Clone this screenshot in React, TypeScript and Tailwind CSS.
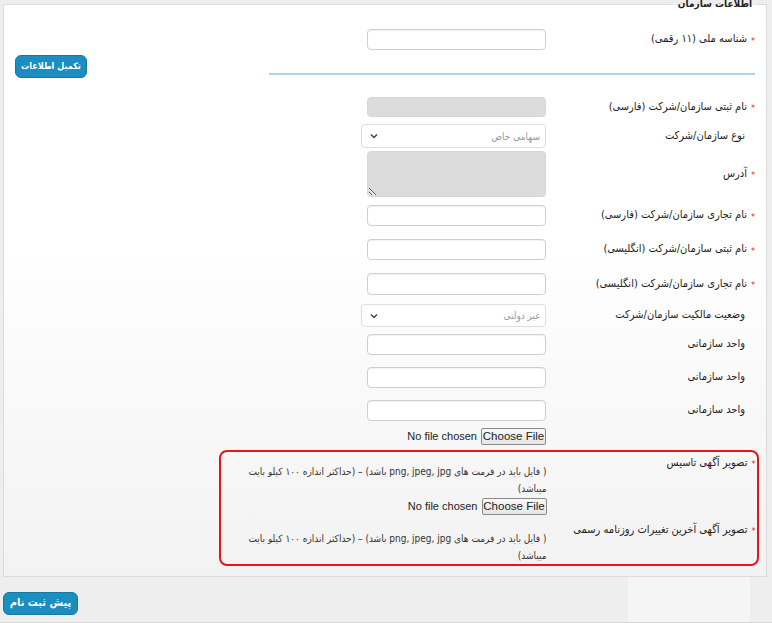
import type { ReactNode } from 'react';

const FA = "font-['DejaVu_Sans_Condensed','DejaVu_Sans',sans-serif]";

const Req = () => <span className="text-[#e0262b] text-[9px] leading-none mt-[3px]">*</span>;

interface RowProps {
    label: string;
    required?: boolean;
    children: ReactNode;
    className?: string;
}

const Row = ({ label, required, children, className = '' }: RowProps) => (
    <div className={`flex items-center ${className}`}>
        <div className={`w-[209px] shrink-0 flex items-center gap-[4px] ${required ? '' : 'pr-[10px]'}`}>
            {required && <Req />}
            <span className="text-[11px] text-[#1c1c1c] whitespace-nowrap">{label}</span>
        </div>
        {children}
    </div>
);

const TextInput = ({ gray = false, h = 'h-[21px]' }: { gray?: boolean; h?: string }) => (
    <input
        type="text"
        readOnly={gray}
        className={`w-[179px] ${h} rounded-[4px] border ${gray ? 'bg-[#dcdcdc] border-[#d6d6d6]' : 'bg-white border-[#cfcfcf] shadow-[inset_0_1px_1px_rgba(0,0,0,0.06)]'} px-2 text-[11px] outline-none`}
    />
);

const Select = ({ value, h }: { value: string; h: string }) => (
    <div className={`w-[185px] ${h} rounded-[4px] border border-[#dedede] bg-white flex items-center justify-between pr-[5px] pl-[8px]`}>
        <span className="text-[10px] text-[#9a9a9a]">{value}</span>
        <svg width="8" height="6" viewBox="0 0 8 6" className="text-[#444]">
            <path d="M1 1.5 L4 4.5 L7 1.5" fill="none" stroke="currentColor" strokeWidth="1.5" />
        </svg>
    </div>
);

const FileField = () => (
    <div className="flex items-center gap-[4px] font-['Liberation_Sans',Arial,sans-serif]" dir="ltr">
        <span className="text-[11px] text-[#222] whitespace-nowrap">No file chosen</span>
        <button className="w-[65px] h-[17px] border border-[#8a8a8a] rounded-[2px] bg-gradient-to-b from-[#f8f8f8] to-[#e6e6e6] text-[11.5px] leading-none text-[#222] whitespace-nowrap px-0">
            Choose File
        </button>
    </div>
);

const Note = ({ className = '' }: { className?: string }) => (
    <p className={`text-[10px] leading-[17px] text-[#333] whitespace-nowrap ${className}`}>
        ( فایل باید در فرمت های png, jpeg, jpg باشد) – (حداکثر اندازه ۱۰۰ کیلو بایت
        <br />
        میباشد)
    </p>
);

export default function App() {
    return (
        <div dir="rtl" className={`${FA} w-[772px] h-[623px] overflow-hidden bg-[#eeeeef] flex flex-col`}>
            <fieldset className="-mt-[3px] ml-[3px] mr-[5px] border border-[#dcdcdc] bg-gradient-to-b from-white from-40% to-[#f2f2f2] pr-[9px] pl-[11px] pt-[18px] pb-[10px]">
                <legend className="px-[5px] text-[10px] leading-[14px] font-bold text-[#222]">اطلاعات سازمان</legend>

                <div className="pr-[2px]">
                    <Row label="شناسه ملی (۱۱ رقمی)" required>
                        <TextInput />
                    </Row>

                    <div className="flex items-end justify-between h-[23px] mt-[5px]">
                        <div className="w-[486px] h-[2px] bg-[#acd6e4] mb-[3px]" />
                        <button className="h-[23px] w-[72px] rounded-[6px] bg-[#1b8dc1] border border-[#17799f] text-white text-[9px] font-bold whitespace-nowrap px-0">
                            تکمیل اطلاعات
                        </button>
                    </div>

                    <Row label="نام ثبتی سازمان/شرکت (فارسی)" required className="mt-[19px]">
                        <TextInput gray h="h-[20px]" />
                    </Row>
                    <Row label="نوع سازمان/شرکت" className="mt-[7px]">
                        <Select value="سهامی خاص" h="h-[24px]" />
                    </Row>
                    <Row label="آدرس" required className="mt-[3px]">
                        <textarea
                            readOnly
                            className="w-[179px] h-[46px] rounded-[4px] border border-[#d6d6d6] bg-[#dcdcdc] outline-none block"
                        />
                    </Row>
                    <Row label="نام تجاری سازمان/شرکت (فارسی)" required className="mt-[8px]">
                        <TextInput />
                    </Row>
                    <Row label="نام ثبتی سازمان/شرکت (انگلیسی)" required className="mt-[13px]">
                        <TextInput />
                    </Row>
                    <Row label="نام تجاری سازمان/شرکت (انگلیسی)" required className="mt-[13px]">
                        <TextInput h="h-[22px]" />
                    </Row>
                    <Row label="وضعیت مالکیت سازمان/شرکت" className="mt-[9px]">
                        <Select value="غیر دولتی" h="h-[23px]" />
                    </Row>
                    <Row label="واحد سازمانی" className="mt-[7px]">
                        <TextInput />
                    </Row>
                    <Row label="واحد سازمانی" className="mt-[12px]">
                        <TextInput />
                    </Row>
                    <Row label="واحد سازمانی" className="mt-[12px]">
                        <TextInput />
                    </Row>

                    <div className="flex mt-[7px] pr-[209px]">
                        <FileField />
                    </div>

                    {/* highlighted uploads */}
                    <div className="-mr-[4px] mt-[5px] w-[540px] rounded-[8px] border-[2.5px] border-[#e3161b] pr-[1.5px] pt-[4px]">
                        <div className="flex items-start">
                            <div className="w-[209px] shrink-0 flex items-center gap-[4px]">
                                <Req />
                                <span className="text-[11px] leading-[14px] text-[#1c1c1c]">تصویر آگهی تاسیس</span>
                            </div>
                            <div className="mt-[7px] flex flex-col items-start">
                                <Note />
                                <div className="mt-[1px]">
                                    <FileField />
                                </div>
                            </div>
                        </div>
                        <div className="flex items-start mt-[8px]">
                            <div className="w-[209px] shrink-0 flex items-center gap-[4px]">
                                <Req />
                                <span className="text-[11px] leading-[14px] text-[#1c1c1c]">تصویر آگهی آخرین تغییرات روزنامه رسمی</span>
                            </div>
                            <div className="mt-[7px]">
                                <Note className="leading-[16px]" />
                            </div>
                        </div>
                    </div>
                </div>
            </fieldset>

            <div className="flex-1 flex items-start justify-between">
                <div className="mr-[22px] w-[122px] h-[45px] bg-[#f5f5f6]" />
                <button className="mt-[15px] ml-[3px] h-[23px] w-[75px] rounded-[6px] bg-[#1b8dc1] border border-[#17799f] text-white text-[11px] font-bold whitespace-nowrap px-0">
                    پیش ثبت نام
                </button>
            </div>
            <div className="h-[3px] border-t border-[#d8d8d8] bg-[#e6e6e6]" />
        </div>
    );
}
